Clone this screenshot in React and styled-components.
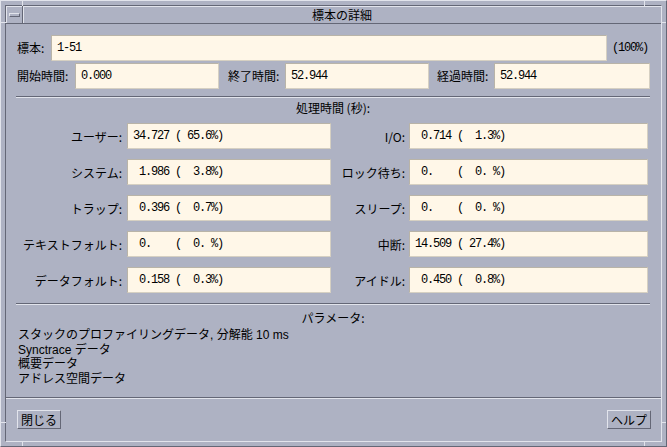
import React from "react";
import styled, { createGlobalStyle } from "styled-components";

const LIGHT = "#e2e4ec";
const DARK = "#646776";
const BG = "#aeb2c3";

const GlobalStyle = createGlobalStyle`
  html, body {
    margin: 0;
    padding: 0;
    background: ${BG};
  }
  body {
    font-family: "Noto Sans CJK JP", "DejaVu Sans", sans-serif;
    font-size: 12px;
    color: #000;
  }
`;

const Window = styled.div`
  position: relative;
  width: 667px;
  height: 447px;
  box-sizing: border-box;
  background: ${BG};
  border: 1px solid;
  border-color: ${LIGHT} ${DARK} ${DARK} ${LIGHT};
  padding: 4px;
`;

const Tick = styled.span`
  position: absolute;
  background: ${LIGHT};
  width: ${(p) => (p.$h ? "5px" : "1px")};
  height: ${(p) => (p.$h ? "1px" : "5px")};
`;

const Inner = styled.div`
  height: 100%;
  box-sizing: border-box;
  display: flex;
  flex-direction: column;
  border: 1px solid;
  border-color: ${DARK} ${LIGHT} ${LIGHT} ${DARK};
`;

const TitleBar = styled.div`
  display: flex;
  height: 17px;
  border-bottom: 1px solid ${DARK};
`;

const MenuButton = styled.div`
  width: 16px;
  display: flex;
  align-items: center;
  justify-content: center;
  border-right: 1px solid ${DARK};
  box-shadow: inset 1px 1px 0 ${LIGHT};
`;

const MenuBar = styled.span`
  width: 9px;
  height: 2px;
  border-top: 1px solid ${LIGHT};
  border-bottom: 1px solid ${DARK};
  border-left: 1px solid ${LIGHT};
  border-right: 1px solid ${DARK};
  margin-top: 1px;
`;

const Title = styled.div`
  flex: 1;
  text-align: center;
  line-height: 17px;
  box-shadow: inset 1px 1px 0 ${LIGHT};
`;

const Main = styled.div`
  flex: 1;
  padding: 11px 11px 0 10px;
`;

const Row = styled.div`
  display: flex;
  align-items: center;
  height: 26px;
  margin-top: ${(p) => p.$top || 0}px;
`;

const Label = styled.span`
  width: ${(p) => p.$w}px;
  margin-left: ${(p) => p.$ml || 0}px;
  white-space: nowrap;
  line-height: 14px;
`;

const Field = styled.div`
  box-sizing: border-box;
  height: 26px;
  width: ${(p) => (p.$w ? `${p.$w}px` : "auto")};
  flex: ${(p) => (p.$w ? "none" : 1)};
  background: #fff7e8;
  border: 1px solid;
  border-color: #b9b4a8 #d6d0c2 #d6d0c2 #b9b4a8;
  padding-left: 5px;
  display: flex;
  align-items: center;
  font-family: "Liberation Mono", "DejaVu Sans Mono", monospace;
  font-size: 12px;
  letter-spacing: -1.2px;
  white-space: pre;
`;

const Pct = styled.span`
  margin-left: 5px;
  margin-right: 2px;
  font-family: "Liberation Mono", "DejaVu Sans Mono", monospace;
  font-size: 12px;
  letter-spacing: -1.2px;
`;

const Separator = styled.div`
  margin-top: ${(p) => p.$top}px;
  border-top: 1px solid ${DARK};
  border-bottom: 1px solid ${LIGHT};
`;

const SectionTitle = styled.div`
  margin-top: ${(p) => p.$top}px;
  text-align: center;
  line-height: 14px;
`;

const Grid = styled.div`
  margin-top: 8px;
  padding-right: 2px;
  display: grid;
  grid-template-columns: 111px 204px 78px 1fr;
  grid-auto-rows: 26px;
  row-gap: 10px;
`;

const GridLabel = styled.div`
  display: flex;
  align-items: center;
  justify-content: flex-end;
  padding-right: ${(p) => p.$pr}px;
  white-space: nowrap;
`;

const ParamList = styled.div`
  margin-top: 3px;
  padding-left: 2px;
  white-space: pre;
  font-family: "Liberation Sans", "Noto Sans CJK JP", sans-serif;
`;

const ParamLine = styled.div`
  height: 14.5px;
  line-height: 14.5px;
`;

const Footer = styled.div`
  height: 44px;
  box-sizing: border-box;
  border-top: 1px solid ${DARK};
  box-shadow: inset 0 1px 0 ${LIGHT};
  padding: 12px 10px 0 11px;
  display: flex;
  justify-content: space-between;
  align-items: flex-start;
`;

const Button = styled.button`
  height: 19px;
  padding: 0 3px;
  margin: 0;
  background: ${BG};
  border: 1px solid;
  border-color: ${LIGHT} ${DARK} ${DARK} ${LIGHT};
  font-family: "Noto Sans CJK JP", sans-serif;
  font-size: 12px;
  line-height: 17px;
  color: #000;
`;

const rows = [
  ["ユーザー:", "34.727 ( 65.6%)", "I/O:", " 0.714 (  1.3%)"],
  ["システム:", " 1.986 (  3.8%)", "ロック待ち:", " 0.    (  0. %)"],
  ["トラップ:", " 0.396 (  0.7%)", "スリープ:", " 0.    (  0. %)"],
  ["テキストフォルト:", " 0.    (  0. %)", "中断:", "14.509 ( 27.4%)"],
  ["データフォルト:", " 0.158 (  0.3%)", "アイドル:", " 0.450 (  0.8%)"],
];

const params = [
  "スタックのプロファイリングデータ, 分解能 10 ms",
  "Synctrace データ",
  "概要データ",
  "アドレス空間データ",
];

export default function App() {
  return (
    <>
      <GlobalStyle />
      <Window>
        <Tick style={{ left: 21, top: 0 }} />
        <Tick style={{ left: 643, top: 0 }} />
        <Tick style={{ left: 21, bottom: 0 }} />
        <Tick style={{ left: 643, bottom: 0 }} />
        <Tick $h style={{ left: 0, top: 21 }} />
        <Tick $h style={{ right: 0, top: 21 }} />
        <Tick $h style={{ left: 0, top: 421 }} />
        <Tick $h style={{ right: 0, top: 421 }} />
        <Inner>
          <TitleBar>
            <MenuButton>
              <MenuBar />
            </MenuButton>
            <Title>標本の詳細</Title>
          </TitleBar>
          <Main>
            <Row>
              <Label $w={34} $ml={1}>標本:</Label>
              <Field>1-51</Field>
              <Pct>(100%)</Pct>
            </Row>
            <Row $top={2}>
              <Label $w={58} $ml={1}>開始時間:</Label>
              <Field $w={144}>0.000</Field>
              <Label $w={57} $ml={9}>終了時間:</Label>
              <Field $w={144}>52.944</Field>
              <Label $w={57} $ml={8}>経過時間:</Label>
              <Field>52.944</Field>
            </Row>
            <Separator $top={7} />
            <SectionTitle $top={3}>処理時間 (秒):</SectionTitle>
            <Grid>
              {rows.map(([l1, v1, l2, v2]) => (
                <React.Fragment key={l1}>
                  <GridLabel $pr={5}>{l1}</GridLabel>
                  <Field>{v1}</Field>
                  <GridLabel $pr={4}>{l2}</GridLabel>
                  <Field>{v2}</Field>
                </React.Fragment>
              ))}
            </Grid>
            <Separator $top={10} />
            <SectionTitle $top={6}>パラメータ:</SectionTitle>
            <ParamList>
              {params.map((p) => (
                <ParamLine key={p}>{p}</ParamLine>
              ))}
            </ParamList>
          </Main>
          <Footer>
            <Button>閉じる</Button>
            <Button>ヘルプ</Button>
          </Footer>
        </Inner>
      </Window>
    </>
  );
}
